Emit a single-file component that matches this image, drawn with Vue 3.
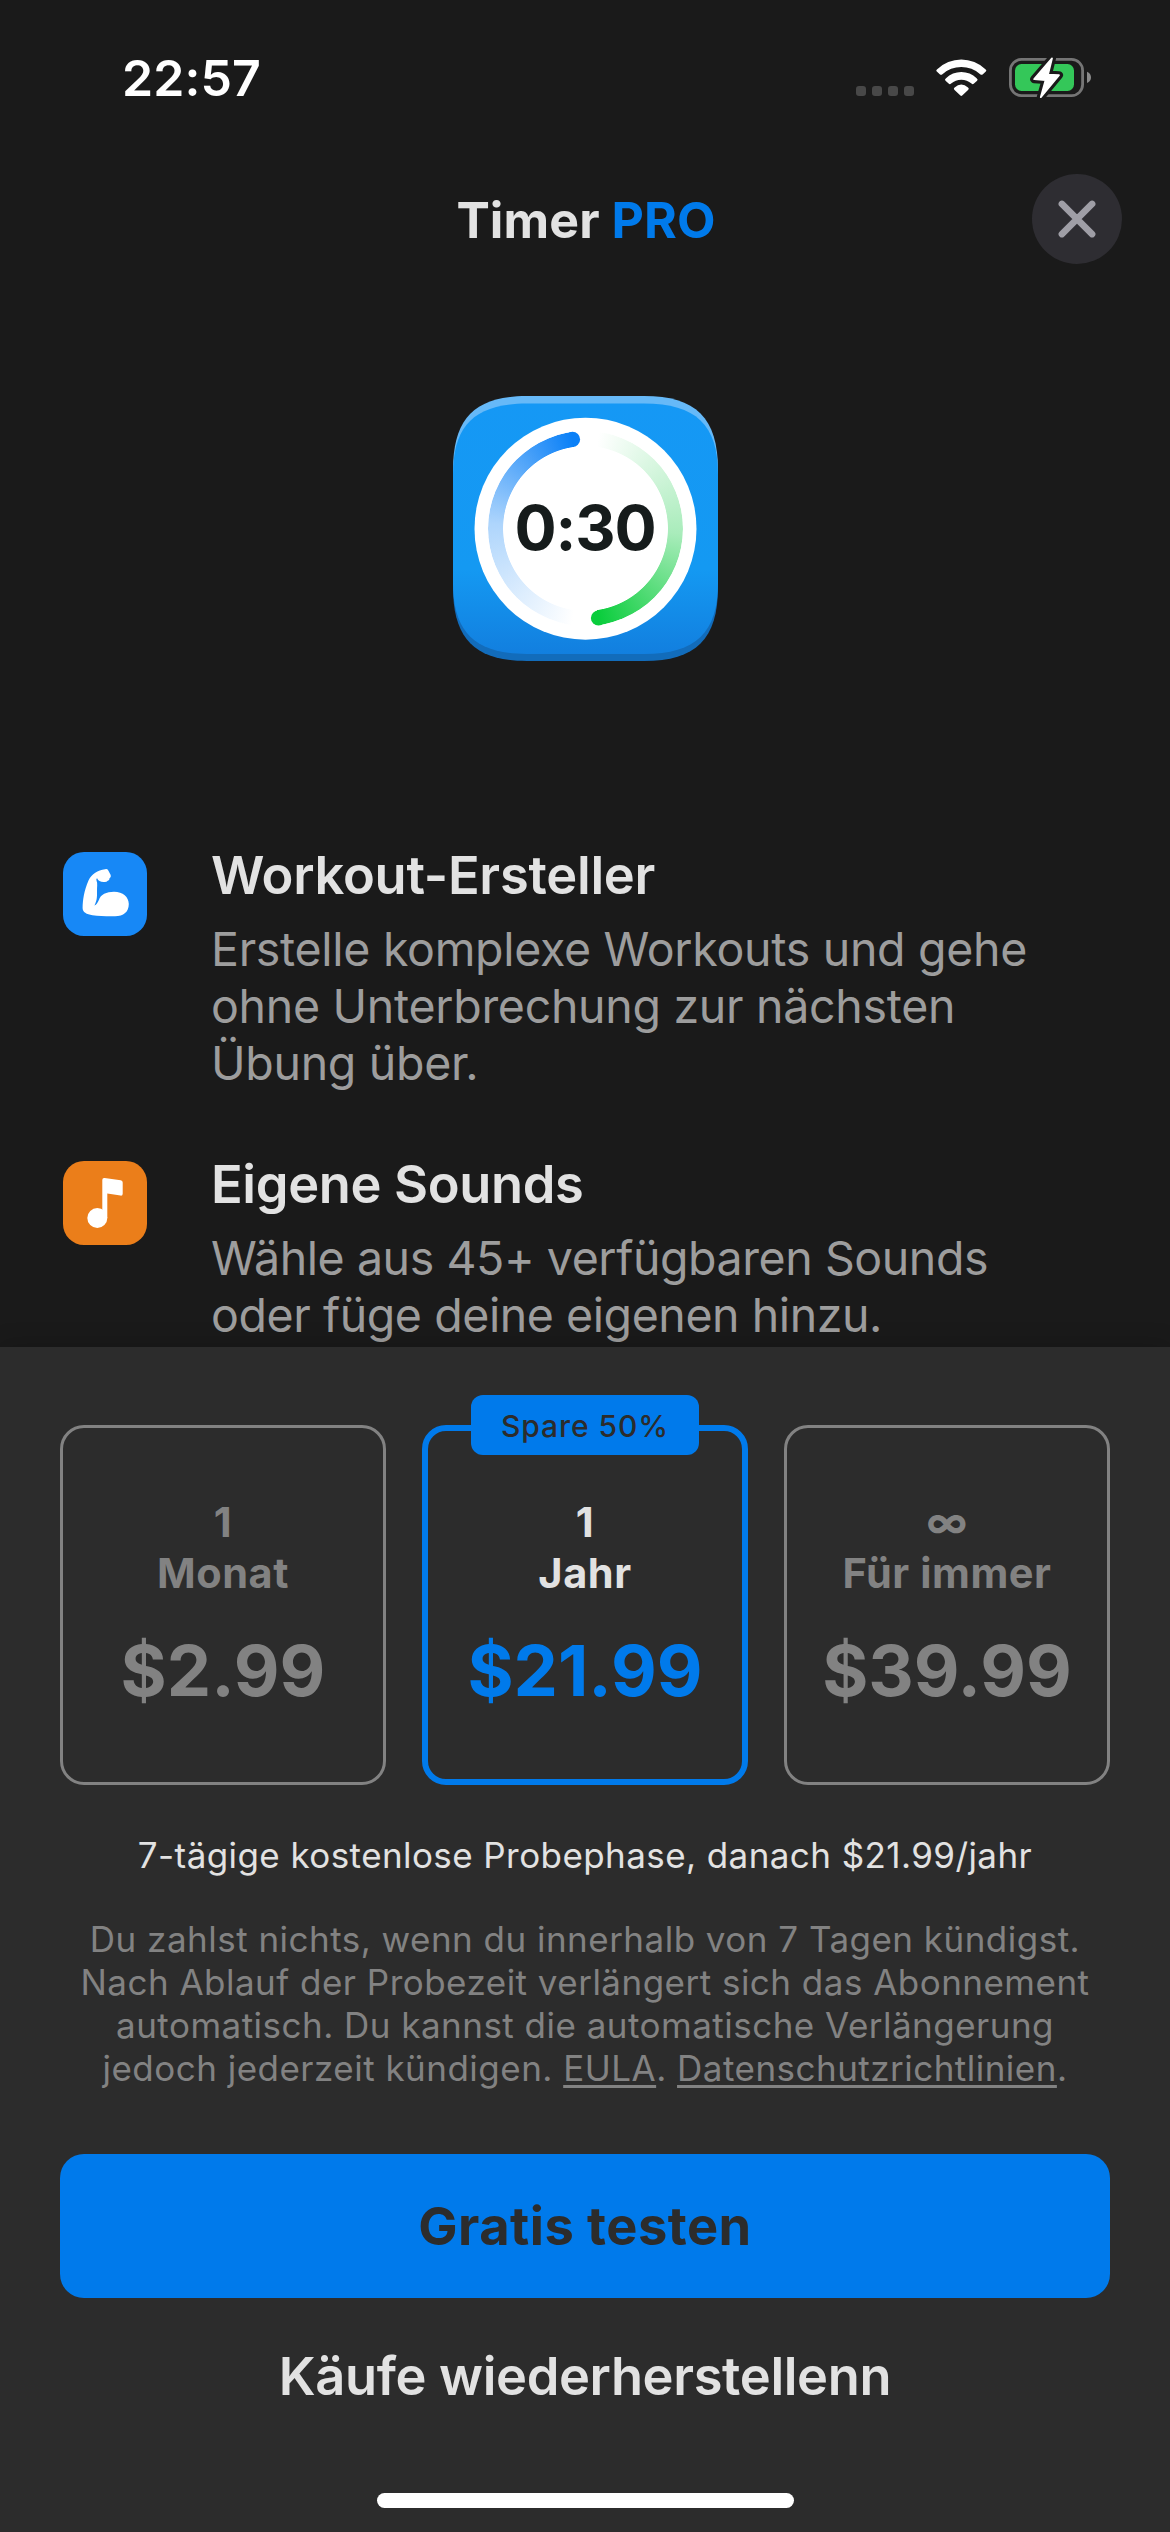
<script setup>
const features = [
  {
    icon: 'muscle',
    title: 'Workout-Ersteller',
    lines: ['Erstelle komplexe Workouts und gehe', 'ohne Unterbrechung zur nächsten', 'Übung über.']
  },
  {
    icon: 'note',
    title: 'Eigene Sounds',
    lines: ['Wähle aus 45+ verfügbaren Sounds', 'oder füge deine eigenen hinzu.']
  }
]

const plans = [
  { amount: '1', unit: 'Monat', price: '$2.99' },
  { amount: '1', unit: 'Jahr', price: '$21.99', badge: 'Spare 50%', selected: true },
  { amount: '∞', unit: 'Für immer', price: '$39.99' }
]
</script>

<template>
  <div class="screen">
    <div class="status">
      <span class="clock">22:57</span>
      <div class="indicators">
        <div class="dots"><i v-for="n in 4" :key="n"></i></div>
        <svg class="wifi" width="52" height="38" viewBox="0 0 52 38" fill="#fff">
          <path d="M1.2 10.2A34.6 34.6 0 0 1 49.4 10.2Q51 11.4 49.8 12.5L46.6 15.4Q45.5 16.3 44.2 15.2A28.2 28.2 0 0 0 6.4 15.2Q5.1 16.3 4 15.4L.8 12.5Q-.4 11.4 1.2 10.2Z" />
          <path d="M10 19.2A21.8 21.8 0 0 1 40.6 19.2Q42.4 20.5 41.1 21.8L37.7 24.8Q36.7 25.7 35.5 24.6A15.4 15.4 0 0 0 15.1 24.6Q13.9 25.7 12.9 24.8L9.500 21.800Q8.200 20.500 10 19.200Z" />
          <path d="M18.600 28.500Q25.300 22.400 32 28.500Q33.400 29.600 32.300 30.700L26.200 36.500Q25.300 37.300 24.400 36.500L18.300 30.700Q17.200 29.600 18.600 28.500Z" />
        </svg>
        <svg class="battery" width="84" height="44" viewBox="0 0 84 44">
          <rect x="1.400" y="3.400" width="72.200" height="36.200" rx="11" fill="none" stroke="#757575" stroke-width="2.800" />
          <rect x="6" y="8" width="59" height="27" rx="6.500" fill="#34c759" />
          <path d="M78 15.700Q82 17.500 82 21.400T78 27Z" fill="#8a8a8a" />
          <path d="M43 2.300 25.200 23.200 36.600 24 31.800 41.200 50 19.200 39 18.600Z" fill="#1a1a1a" stroke="#1a1a1a" stroke-width="8" stroke-linejoin="round" />
          <path d="M43 2.300 25.200 23.200 36.600 24 31.800 41.200 50 19.200 39 18.600Z" fill="#fff" stroke="#fff" stroke-width="1.800" stroke-linejoin="round" />
        </svg>
      </div>
    </div>

    <header class="header">
      <h1>Timer <span>PRO</span></h1>
      <button class="close" aria-label="Schließen">
        <svg width="38" height="38" viewBox="0 0 38 38" fill="none" stroke="#9f9ea6" stroke-width="6.600" stroke-linecap="round">
          <path d="M3.900 3.900 34.100 34.100M34.100 3.900 3.900 34.100" />
        </svg>
      </button>
    </header>

    <div class="app-icon">
      <svg width="265" height="265" viewBox="0 0 265 265">
        <defs>
          <linearGradient id="edge" x1="0" y1="0" x2="0" y2="1">
            <stop offset=".5" stop-color="#66b9f8" />
            <stop offset=".5" stop-color="#126cbb" />
          </linearGradient>
          <linearGradient id="face" x1="0" y1="0" x2="0" y2="1">
            <stop offset="0" stop-color="#1598f5" />
            <stop offset=".66" stop-color="#1499f2" />
            <stop offset="1" stop-color="#127fdf" />
          </linearGradient>
        </defs>
        <path d="M0 74C0 22 22 0 74 0H191C243 0 265 22 265 74V191C265 243 243 265 191 265H74C22 265 0 243 0 191Z" fill="url(#edge)" />
        <path d="M0 78C0 29 22 7.500 74 7.500H191C243 7.500 265 29 265 78V187C265 236 243 258 191 258H74C22 258 0 236 0 187Z" fill="url(#face)" />
        <circle cx="132.500" cy="132.700" r="111" fill="#fff" />
        <circle cx="119.500" cy="43.400" r="7.600" fill="#0a80f7" />
        <circle cx="145.500" cy="222" r="7.600" fill="#0acd3c" />
      </svg>
      <div class="ring"></div>
      <div class="countdown">0:30</div>
    </div>

    <div class="features">
      <section v-for="f in features" :key="f.title" class="feature">
        <div class="tile" :class="f.icon">
          <svg width="84" height="84" viewBox="0 0 84 84" fill="#fff">
            <path v-if="f.icon === 'muscle'" d="M42.100 17.200Q44.300 16.600 45.300 18.500L47.700 23Q48.400 25.400 46.400 26.400Q46.700 28.400 44.700 28.700Q43.700 30.200 41.500 30.100C37.500 30.300 35.300 29 34.100 26.300Q32.900 26.500 33.500 28.500C34.800 31.500 33.900 35 34 39C34.200 46 33.700 49 31.400 53.600Q33.500 53.300 36 47.800C37.500 42.500 43.500 39.700 51 39.700C60 39.700 65.800 45 65.800 52C65.800 60 60.500 64.200 52 64.200C44 64.200 36 64.300 29.500 63.200C23.500 62.300 19.600 60.200 19.600 56C19.700 48 21.100 38.500 25.500 28.500C29 21.500 34.500 18.500 42.100 17.200Z" />
            <g v-else>
              <circle cx="34.300" cy="57" r="10" />
              <path d="M39.300 57V19Q39.300 16.700 41.600 17L57.700 19.200Q59.700 19.500 59.700 21.500V32.700Q59.700 34.900 57.500 34.600L44.300 32.600V57Z" />
            </g>
          </svg>
        </div>
        <div class="copy">
          <h2>{{ f.title }}</h2>
          <p><span v-for="l in f.lines" :key="l">{{ l }}</span></p>
        </div>
      </section>
    </div>

    <div class="sheet">
      <div class="plans">
        <div v-for="p in plans" :key="p.price" class="plan" :class="{ selected: p.selected }">
          <div v-if="p.badge" class="badge">{{ p.badge }}</div>
          <div class="term">{{ p.amount }}</div>
          <div class="term">{{ p.unit }}</div>
          <div class="price">{{ p.price }}</div>
        </div>
      </div>
      <p class="trial">7-tägige kostenlose Probephase, danach $21.99/jahr</p>
      <p class="legal">
        Du zahlst nichts, wenn du innerhalb von 7 Tagen kündigst.<br />
        Nach Ablauf der Probezeit verlängert sich das Abonnement<br />
        automatisch. Du kannst die automatische Verlängerung<br />
        jedoch jederzeit kündigen. <a>EULA</a>. <a>Datenschutzrichtlinien</a>.
      </p>
      <button class="cta">Gratis testen</button>
      <button class="restore">Käufe wiederherstellenn</button>
      <div class="home"></div>
    </div>
  </div>
</template>

<style>
body {
  margin: 0;
  background: #1a1a1a;
}
</style>

<style scoped>
.screen {
  width: 1170px;
  height: 2532px;
  overflow: hidden;
  display: flex;
  flex-direction: column;
  background: #1a1a1a;
  color: #e2e2e2;
  font-family: Inter, "Liberation Sans", sans-serif;
  white-space: nowrap;
}
h1, h2, p { margin: 0; }
button {
  border: 0;
  padding: 0;
  background: none;
  color: inherit;
  font-family: inherit;
}
svg { display: block; }

.status {
  box-sizing: border-box;
  height: 156px;
  padding: 0 77px 0 122px;
  display: flex;
  align-items: center;
  justify-content: space-between;
}
.clock {
  color: #fff;
  font-size: 50px;
  font-weight: 600;
  letter-spacing: 0.1px;
}
.indicators { display: flex; align-items: center; }
.dots { display: flex; gap: 6px; margin: 26px 22px 0 0; }
.dots i { width: 10px; height: 10px; border-radius: 3px; background: #484848; }
.wifi { margin: 0 21px 0 0; }

.header {
  height: 126px;
  padding: 0 48px;
  display: grid;
  grid-template-columns: 90px 1fr 90px;
  align-items: center;
}
h1 {
  grid-column: 2;
  padding: 2px 0 0 2px;
  text-align: center;
  font-size: 50px;
  font-weight: 700;
  letter-spacing: 0.1px;
}
h1 span { color: #007aeb; }
.close {
  width: 90px;
  height: 90px;
  border-radius: 50%;
  display: grid;
  place-items: center;
  background: #2e2d32;
}

.app-icon {
  position: relative;
  width: 265px;
  height: 265px;
  margin: 114px auto 0;
}
.ring {
  position: absolute;
  left: 35px;
  top: 35.2px;
  width: 195px;
  height: 195px;
  border-radius: 50%;
  background: conic-gradient(#fff 0deg, #fff 8deg, #a9ecbb 93deg, #0acd3c 171.700deg, transparent 171.700deg, transparent 188deg, #fff 188deg, #aed5fc 273deg, #0a80f7 351.700deg, transparent 351.700deg);
  mask: radial-gradient(circle, transparent 82px, #000 82.800px);
}
.countdown {
  position: absolute;
  inset: 0;
  line-height: 263px;
  text-align: center;
  color: #161c1c;
  font-size: 62.5px;
  font-weight: 700;
  letter-spacing: -1.1px;
}

.features {
  height: 501px;
  margin-top: 185px;
  padding: 0 63px;
  display: flex;
  flex-direction: column;
  gap: 63px;
}
.feature { display: flex; flex: none; gap: 64px; }
.tile {
  flex: none;
  width: 84px;
  height: 84px;
  margin-top: 6px;
  border-radius: 21px;
}
.muscle { background: #1788f6; }
.note { background: #eb7e1a; }
h2 {
  font-size: 52.4px;
  font-weight: 600;
  line-height: 58px;
  letter-spacing: -0.25px;
}
.copy p {
  margin-top: 17px;
  color: #9d9d9d;
  font-size: 46.5px;
  line-height: 57px;
  letter-spacing: -0.3px;
}
.feature:nth-child(2) h2 { letter-spacing: -0.35px; }
.feature:nth-child(2) p { letter-spacing: -0.43px; }
.copy p span { display: block; }

.sheet {
  position: relative;
  flex: 1;
  display: flex;
  flex-direction: column;
  padding: 78px 60px 0;
  background: #2c2c2c;
  box-shadow: 0 0 24px rgba(0, 0, 0, 0.2);
}
.plans {
  display: grid;
  grid-template-columns: repeat(3, 326px);
  gap: 36px;
}
.plan {
  position: relative;
  box-sizing: border-box;
  height: 360px;
  padding-top: 68.5px;
  border: 3px solid #828282;
  border-radius: 24px;
  text-align: center;
  color: #828282;
}
.selected {
  border: 6px solid #007aeb;
  padding-top: 65.5px;
  color: #e2e2e2;
}
.badge {
  position: absolute;
  top: -36px;
  left: 50%;
  width: 228px;
  margin-left: -114px;
  border-radius: 12px;
  background: #007aeb;
  color: #2c2c2c;
  font-size: 30px;
  font-weight: 500;
  line-height: 62px;
  height: 60px;
  letter-spacing: 0.95px;
}
.term {
  font-size: 41.5px;
  font-weight: 700;
  line-height: 51px;
  letter-spacing: 0.55px;
}
.price {
  margin-top: 30px;
  font-size: 70.5px;
  font-weight: 700;
  line-height: 84px;
}
.selected .price { color: #007aeb; }

.trial, .legal {
  text-align: center;
  font-size: 35px;
  line-height: 43px;
}
.trial { margin-top: 49px; letter-spacing: 0.42px; }
.legal { margin-top: 41px; color: #828282; letter-spacing: 0.48px; }
.legal a {
  text-decoration: underline;
  text-decoration-thickness: 3px;
  text-underline-offset: 4px;
  text-decoration-skip-ink: none;
}
.cta {
  height: 144px;
  margin-top: 64px;
  border-radius: 24px;
  background: #007aeb;
  color: #2c2c2c;
  font-size: 52.4px;
  font-weight: 700;
  letter-spacing: 0.47px;
}
.restore {
  margin-top: 48px;
  font-size: 52.4px;
  font-weight: 600;
  line-height: 60px;
  letter-spacing: -0.35px;
}
.home {
  width: 417px;
  height: 15px;
  margin: 87px auto 0;
  border-radius: 7.5px;
  background: #fff;
}
</style>
